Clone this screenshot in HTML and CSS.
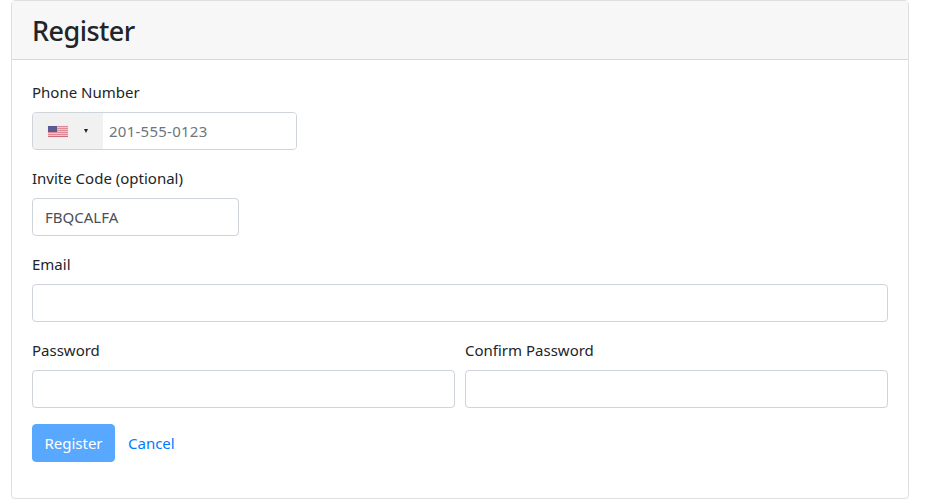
FILE: index.html
```html
<!DOCTYPE html>
<html lang="en">
<head>
    <meta charset="UTF-8">
    <meta name="viewport" content="width=device-width, initial-scale=1.0">
    <title>Register</title>
    <link rel="stylesheet" href="styles.css">
</head>
<body>

<div class="card">
    <div class="card-header">
        <h3>Register</h3>
    </div>
    <form class="card-body">
        <div class="form-group">
            <label>Phone Number</label>
            <div class="phone-input">
                <div class="flag-box">
                    <svg class="flag" width="22" height="13" viewBox="0 0 22 13">
                        <rect width="22" height="13" fill="#f1ebeb"/>
                        <rect x="1" y="1" width="20" height="11" fill="#f0d3d6"/>
                        <rect x="1" y="1" width="20" height="1.2" fill="#dd8b96"/>
                        <rect x="1" y="3" width="20" height="1.2" fill="#dd8b96"/>
                        <rect x="1" y="5" width="20" height="1.2" fill="#dd8b96"/>
                        <rect x="1" y="7" width="20" height="1.2" fill="#dd8b96"/>
                        <rect x="1" y="9" width="20" height="1.2" fill="#dd8b96"/>
                        <rect x="1" y="11" width="20" height="1" fill="#cf6c7a"/>
                        <rect x="1" y="1" width="9" height="6" fill="#5b5b8f"/>
                    </svg>
                    <span class="caret"></span>
                </div>
                <input type="text" placeholder="201-555-0123">
            </div>
        </div>
        <div class="form-group">
            <label>Invite Code (optional)</label>
            <input type="text" class="form-control invite" value="FBQCALFA">
        </div>
        <div class="form-group">
            <label>Email</label>
            <input type="text" class="form-control">
        </div>
        <div class="form-row">
            <div class="form-group">
                <label>Password</label>
                <input type="password" class="form-control">
            </div>
            <div class="form-group">
                <label>Confirm Password</label>
                <input type="password" class="form-control">
            </div>
        </div>
        <div class="form-actions">
            <button type="button" class="btn btn-primary" disabled>Register</button>
            <a href="#" class="btn btn-link">Cancel</a>
        </div>
    </form>
</div>

</body>
</html>
```

FILE: styles.css
```css
* {
    box-sizing: border-box;
}
body {
    margin: 0;
    font-family: "Noto Sans", "Open Sans", Arial, sans-serif;
    font-size: 15px;
    line-height: 24px;
    color: #212529;
    background-color: #fff;
}
.card {
    width: 898px;
    margin-left: 11px;
    border: 1px solid rgba(0, 0, 0, 0.125);
    border-radius: 4px;
}
.card-header {
    height: 59px;
    padding: 13px 20px;
    background-color: #f7f7f7;
    border-bottom: 1px solid rgba(0, 0, 0, 0.125);
}
.card-header h3 {
    margin: 0;
    font-size: 27px;
    font-weight: 500;
    letter-spacing: -0.55px;
    line-height: 34px;
}
.card-body {
    padding: 20px;
}
.form-group {
    margin-bottom: 16px;
}
.form-group label {
    display: block;
    margin-bottom: 8px;
}
.form-control, .phone-input {
    display: block;
    width: 100%;
    height: 38px;
    border: 1px solid #ced4da;
    border-radius: 4px;
    background-color: #fff;
}
.form-control {
    padding: 6px 12px;
    font: inherit;
    color: #495057;
}
.invite {
    width: 207px;
}
.phone-input {
    display: flex;
    width: 265px;
    overflow: hidden;
}
.phone-input input {
    flex: 1;
    min-width: 0;
    padding: 0 6px;
    border: 0;
    font: inherit;
    letter-spacing: 0.25px;
    color: #495057;
}
.phone-input input::placeholder {
    color: #6c757d;
    opacity: 1;
}
.flag-box {
    display: flex;
    align-items: center;
    width: 70px;
    padding-left: 14px;
    background-color: #f1f1f1;
}
.flag {
    display: block;
}
.caret {
    margin-left: 15px;
    border-top: 4px solid #222;
    border-left: 2.5px solid transparent;
    border-right: 2.5px solid transparent;
}
.form-row {
    display: grid;
    grid-template-columns: 1fr 1fr;
    gap: 10px;
}
.form-actions {
    display: flex;
    margin-bottom: 16px;
}
.btn {
    height: 38px;
    padding: 6px 12px;
    border: 1px solid transparent;
    border-radius: 4px;
    font: inherit;
    text-decoration: none;
}
.btn-primary {
    width: 83px;
    padding: 6px 0;
    color: #fff;
    background-color: #007bff;
    border-color: #007bff;
    opacity: 0.65;
}
.btn-link {
    color: #007bff;
}
```
